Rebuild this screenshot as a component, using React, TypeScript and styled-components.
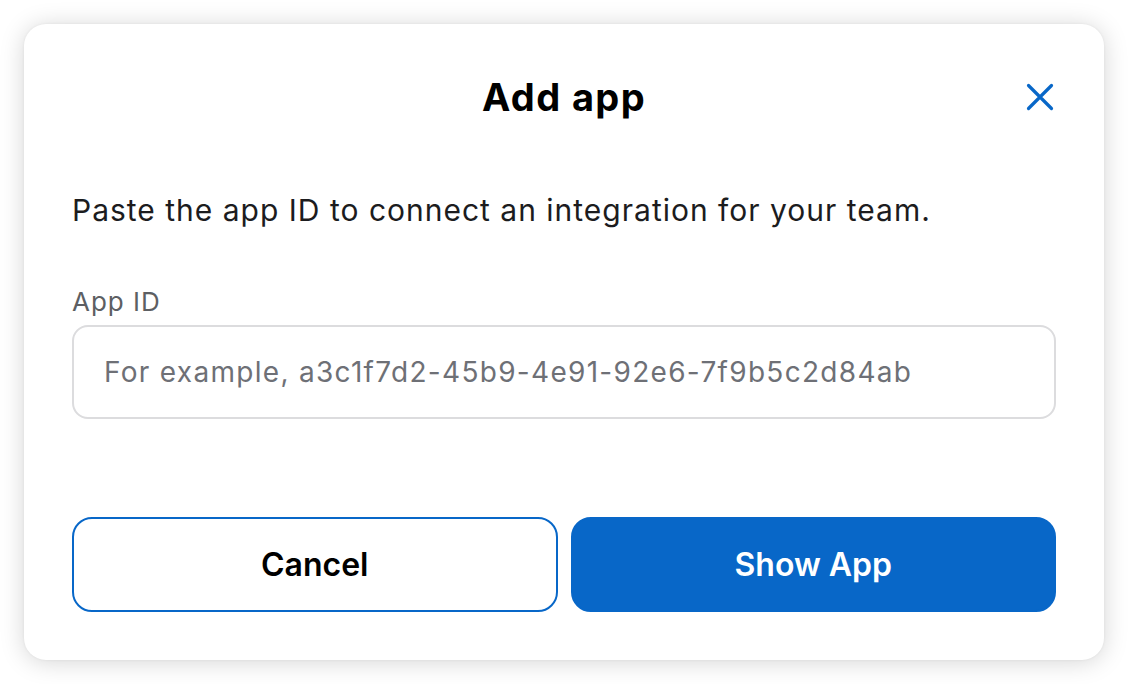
import React from "react";
import styled, { createGlobalStyle } from "styled-components";

const Global = createGlobalStyle`
  html, body { margin: 0; padding: 0; background: #ffffff; }
  body { font-family: Inter, "Noto Sans", sans-serif; -webkit-font-smoothing: antialiased; }
  * { box-sizing: border-box; }
`;

const Page = styled.div`
  width: 1128px;
  height: 684px;
  padding: 24px;
  background: #ffffff;
`;

const Card = styled.div`
  width: 1080px;
  height: 636px;
  background: #ffffff;
  border-radius: 22px;
  box-shadow: 0 2px 24px rgba(0, 0, 0, 0.17), 0 0 3px rgba(0, 0, 0, 0.06);
  padding: 48px;
  display: flex;
  flex-direction: column;
`;

const Header = styled.div`
  height: 50px;
  position: relative;
  display: flex;
  align-items: center;
  justify-content: center;
`;

const Title = styled.h1`
  margin: 0;
  font-size: 38px;
  font-weight: 700;
  color: #000;
  letter-spacing: 1.4px;
`;

const CloseButton = styled.button`
  position: absolute;
  right: -1px;
  top: 50%;
  transform: translateY(-50%);
  width: 34px;
  height: 34px;
  border: 0;
  padding: 0;
  background: transparent;
  display: flex;
  align-items: center;
  justify-content: center;
  cursor: pointer;
`;

const Description = styled.p`
  margin: 70px 0 0;
  font-size: 30px;
  line-height: 36px;
  letter-spacing: 1px;
  color: #1c1c1e;
`;

const Label = styled.label`
  margin-top: 59px;
  font-size: 26px;
  line-height: 30px;
  letter-spacing: 1px;
  color: #5d5f63;
`;

const Input = styled.input`
  margin-top: 8px;
  height: 94px;
  width: 100%;
  border: 2px solid #dcdcde;
  border-radius: 16px;
  padding: 0 30px;
  font-family: inherit;
  font-size: 28px;
  letter-spacing: 1.3px;
  color: #111;
  outline: none;
  &::placeholder { color: #6e7076; }
`;

const Actions = styled.div`
  margin-top: auto;
  display: grid;
  grid-template-columns: 1fr 1fr;
  gap: 13px;
`;

const Button = styled.button<{ $primary?: boolean }>`
  height: 95px;
  border-radius: 20px;
  font-family: inherit;
  font-size: 32px;
  font-weight: 600;
  cursor: pointer;
  border: 2px solid #0867c8;
  background: ${(p) => (p.$primary ? "#0867c8" : "#ffffff")};
  color: ${(p) => (p.$primary ? "#ffffff" : "#000000")};
`;

export default function App() {
  return (
    <>
      <Global />
      <Page>
        <Card>
          <Header>
            <Title>Add app</Title>
            <CloseButton aria-label="Close">
              <svg width="28" height="28" viewBox="0 0 28 28" fill="none">
                <path d="M2.5 2.5 L25.5 25.5 M25.5 2.5 L2.5 25.5" stroke="#0867c8" strokeWidth="3.2" strokeLinecap="round" />
              </svg>
            </CloseButton>
          </Header>
          <Description>Paste the app ID to connect an integration for your team.</Description>
          <Label htmlFor="appid">App ID</Label>
          <Input id="appid" placeholder="For example, a3c1f7d2-45b9-4e91-92e6-7f9b5c2d84ab" />
          <Actions>
            <Button>Cancel</Button>
            <Button $primary>Show App</Button>
          </Actions>
        </Card>
      </Page>
    </>
  );
}
